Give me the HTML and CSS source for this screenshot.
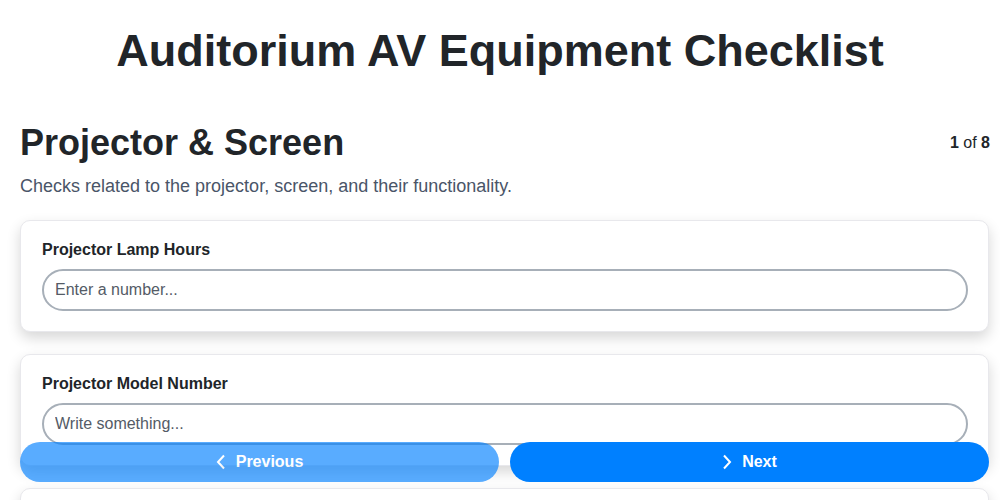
FILE: index.html
```html
<!DOCTYPE html>
<html lang="en">
<head>
    <meta charset="UTF-8">
    <meta name="viewport" content="width=device-width, initial-scale=1.0">
    <title>Auditorium AV Equipment Checklist</title>
    <link rel="stylesheet" href="styles.css">
</head>
<body>
    <div class="page">
        <h1 class="title">Auditorium AV Equipment Checklist</h1>

        <div class="section-head">
            <h2 class="section-title">Projector &amp; Screen</h2>
            <div class="step"><b>1</b> of <b>8</b></div>
        </div>
        <p class="section-desc">Checks related to the projector, screen, and their functionality.</p>

        <div class="card">
            <label class="field-label" for="lampHours">Projector Lamp Hours</label>
            <input class="field-input" id="lampHours" type="text" placeholder="Enter a number...">
        </div>

        <div class="card">
            <label class="field-label" for="modelNumber">Projector Model Number</label>
            <input class="field-input" id="modelNumber" type="text" placeholder="Write something...">
        </div>

        <div class="card">
            <label class="field-label" for="screenCheck">Screen Condition</label>
            <input class="field-input" id="screenCheck" type="text" placeholder="Write something...">
        </div>
    </div>

    <!-- navegación fija abajo -->
    <div class="nav">
        <button class="nav-btn prev" disabled>
            <svg width="10" height="16" viewBox="0 0 10 16"><path d="M8 1.5 L2 8 L8 14.5" fill="none" stroke="#fff" stroke-width="2"/></svg>
            Previous
        </button>
        <button class="nav-btn next">
            <svg width="10" height="16" viewBox="0 0 10 16"><path d="M2 1.5 L8 8 L2 14.5" fill="none" stroke="#fff" stroke-width="2"/></svg>
            Next
        </button>
    </div>
</body>
</html>
```

FILE: styles.css
```css
body {
    margin: 0;
    background: #ffffff;
    font-family: 'Liberation Sans', Arial, sans-serif;
    color: #212529;
}

.page {
    width: 969px;
    padding: 24px 0 0 20px;
}

.title {
    margin: 0 -11px 44px -20px;
    font-size: 45px;
    line-height: 53px;
    text-align: center;
    color: #212529;
}

.section-head {
    display: flex;
    justify-content: space-between;
    align-items: flex-start;
}

.section-title {
    margin: 0;
    font-size: 36px;
    line-height: 44px;
}

.step {
    font-size: 16px;
    line-height: 20px;
    margin-top: 12px;
    margin-right: -1px;
}

.section-desc {
    margin: 11px 0 23px;
    font-size: 18px;
    line-height: 21px;
    color: #4a5568;
}

.card {
    background: #ffffff;
    border: 1px solid #e8e8ec;
    border-radius: 10px;
    padding: 19px 20px 20px 21px;
    margin-bottom: 22px;
    box-shadow: 0 6px 14px rgba(0, 0, 0, 0.16);
}

.field-label {
    display: block;
    font-size: 16px;
    font-weight: bold;
    line-height: 20px;
    margin-bottom: 9px;
}

.field-input {
    display: block;
    box-sizing: border-box;
    width: 100%;
    height: 42px;
    padding: 0 11px;
    border: 2px solid #a7afb8;
    border-radius: 21px;
    font-family: inherit;
    font-size: 16px;
    color: #212529;
    outline: none;
}

.field-input::placeholder {
    color: #545b66;
}

.nav {
    position: fixed;
    left: 20px;
    bottom: 18px;
    width: 969px;
    display: flex;
    gap: 11px;
}

.nav-btn {
    flex: 1;
    height: 40px;
    display: flex;
    justify-content: center;
    align-items: center;
    gap: 10px;
    border: none;
    border-radius: 20px;
    background: #0080ff;
    color: #ffffff;
    font-family: inherit;
    font-size: 16px;
    font-weight: bold;
    cursor: pointer;
}

.nav-btn.prev {
    opacity: 0.65;
    cursor: default;
}
```
